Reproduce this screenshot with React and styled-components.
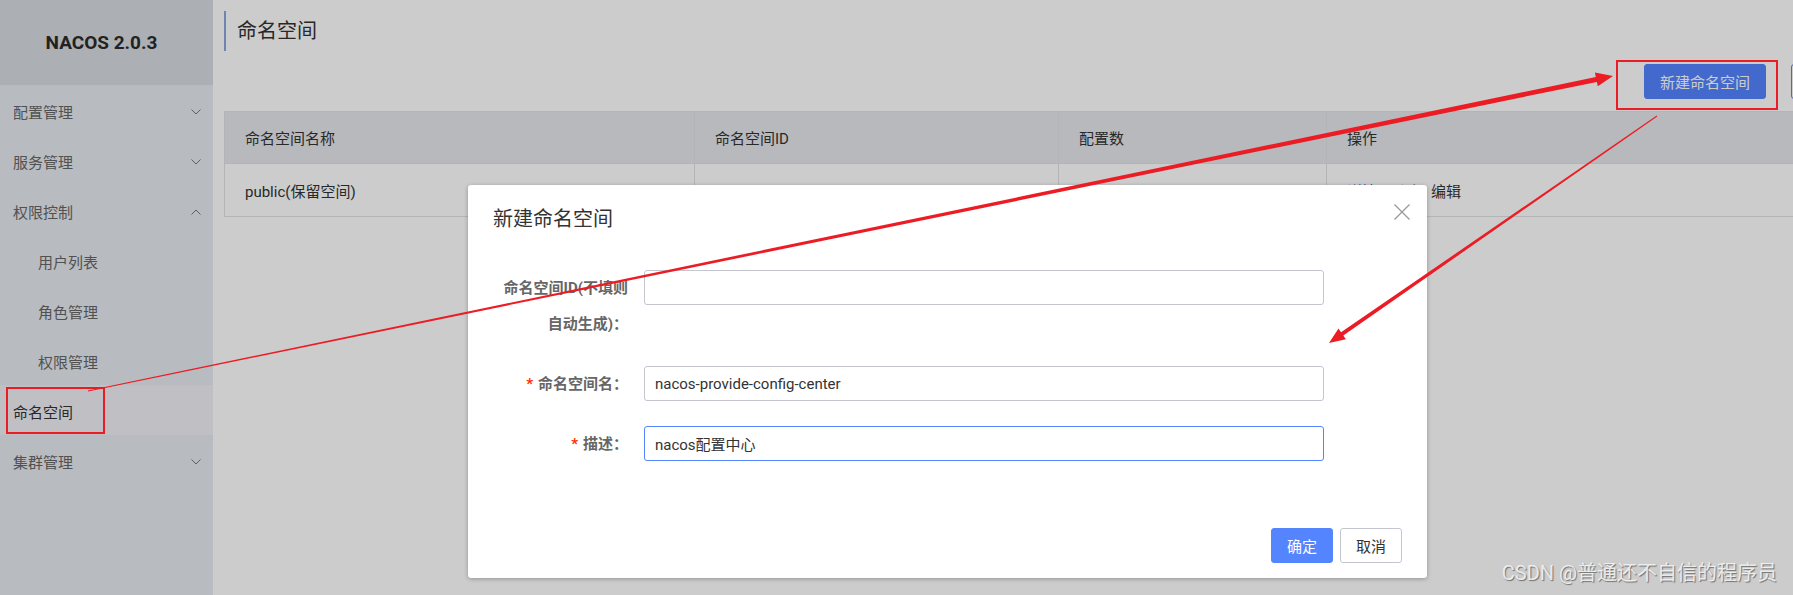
import React from 'react'
import styled, { createGlobalStyle } from 'styled-components'

const GlobalStyle = createGlobalStyle`
  html, body {
    margin: 0;
    padding: 0;
  }
  body {
    width: 1793px;
    height: 595px;
    overflow: hidden;
    font-family: Roboto, "Noto Sans CJK SC", sans-serif;
    font-size: 15px;
    color: #333;
    background: #fff;
  }
  * {
    box-sizing: border-box;
  }
`

const Page = styled.div`
  position: relative;
  display: flex;
  width: 1793px;
  height: 595px;
  overflow: hidden;
`

const Sidebar = styled.aside`
  width: 213px;
  flex-shrink: 0;
  display: flex;
  flex-direction: column;
  background: #e7ebf0;
`

const Brand = styled.div`
  height: 85px;
  display: flex;
  align-items: center;
  justify-content: center;
  padding-right: 10px;
  background: #d8dce1;
  font-size: 19px;
  font-weight: 700;
  color: #2b2b2b;
`

const MenuItem = styled.div`
  height: 50px;
  display: flex;
  align-items: center;
  justify-content: space-between;
  padding: 3px 12px 0 ${p => (p.$sub ? 38 : 13)}px;
  background: ${p => (p.$active ? '#f0eff5' : 'transparent')};
  color: ${p => (p.$active ? '#333' : '#666')};
  font-size: 15px;
`

const Main = styled.main`
  flex: 1;
  min-width: 0;
  overflow: hidden;
  padding: 11px 0 0 11px;
  background: #fff;
`

const Content = styled.div`
  width: 1667px;
`

const PageTitle = styled.h1`
  margin: 0;
  height: 40px;
  padding-left: 11px;
  border-left: 2px solid #8aa7e0;
  font-size: 20px;
  font-weight: 400;
  line-height: 40px;
  color: #333;
`

const Toolbar = styled.div`
  display: flex;
  justify-content: flex-end;
  gap: 25px;
  margin-top: 13px;
  height: 35px;
`

const Button = styled.button`
  height: 35px;
  padding: 0 15px;
  min-width: ${p => p.$width || 0}px;
  display: inline-flex;
  align-items: center;
  justify-content: center;
  border-radius: 3px;
  border: 1px solid ${p => (p.$primary || p.$outline ? '#5584ff' : '#c4c6cf')};
  background: ${p => (p.$primary ? '#5584ff' : '#fff')};
  color: ${p => (p.$primary ? '#fff' : '#333')};
  font-family: inherit;
  font-size: 15px;
  white-space: nowrap;
`

const Table = styled.table`
  margin-top: 12px;
  width: 100%;
  border-collapse: collapse;
  table-layout: fixed;
  font-size: 15px;
`

const Th = styled.th`
  height: 52px;
  padding: 0 20px;
  background: #e7e8ed;
  border: 1px solid #e2e2e4;
  text-align: left;
  font-weight: 400;
  color: #333;
`

const Td = styled.td`
  height: 53px;
  padding: 0 20px;
  border: 1px solid #e2e2e4;
  color: #333;
`

const OpLink = styled.span`
  margin-right: 12px;
  color: ${p => (p.$link ? '#2a5ed8' : '#333')};
`

const Mask = styled.div`
  position: absolute;
  inset: 0;
  background: rgba(0, 0, 0, 0.2);
`

const Dialog = styled.div`
  position: absolute;
  left: 468px;
  top: 185px;
  width: 959px;
  height: 393px;
  display: flex;
  flex-direction: column;
  background: #fff;
  border-radius: 3px;
  box-shadow: 0 1px 4px rgba(0, 0, 0, 0.28);
`

const DialogHeader = styled.div`
  height: 64px;
  display: flex;
  align-items: center;
  justify-content: space-between;
  padding: 0 17px 0 25px;
`

const DialogTitle = styled.div`
  font-size: 20px;
  color: #333;
`

const Close = styled.svg`
  align-self: flex-start;
  margin-top: 19px;
`

const DialogBody = styled.div`
  padding: 21px 25px 0;
`

const FormRow = styled.div`
  display: flex;
  align-items: flex-start;
  margin-bottom: 24px;
`

const Label = styled.label`
  width: 151px;
  flex-shrink: 0;
  padding-right: 16px;
  text-align: right;
  line-height: 36px;
  font-size: 15px;
  font-weight: 700;
  color: #666;
`

const Required = styled.span`
  margin-right: 5px;
  color: #ff3000;
`

const Input = styled.input`
  width: 680px;
  height: 35px;
  padding: 0 10px;
  border: 1px solid ${p => (p.$focus ? '#5584ff' : '#c4c6cf')};
  border-radius: 3px;
  outline: none;
  font-family: inherit;
  font-size: 15px;
  color: #333;
`

const DialogFooter = styled.div`
  margin-top: auto;
  display: flex;
  justify-content: flex-end;
  gap: 7px;
  padding: 0 25px 15px;
`

const Watermark = styled.div`
  position: absolute;
  right: 16px;
  bottom: 8px;
  font-size: 20px;
  line-height: 28px;
  color: rgba(245, 245, 245, 0.9);
  text-shadow: 1px 1px 1px rgba(0, 0, 0, 0.45);
`

const Annotations = styled.svg`
  position: absolute;
  left: 0;
  top: 0;
  pointer-events: none;
`

const menu = [
  { label: '配置管理', chevron: 'down' },
  { label: '服务管理', chevron: 'down' },
  { label: '权限控制', chevron: 'up' },
  { label: '用户列表', sub: true },
  { label: '角色管理', sub: true },
  { label: '权限管理', sub: true },
  { label: '命名空间', active: true },
  { label: '集群管理', chevron: 'down' },
]

const Chevron = ({ dir }) => (
  <svg width="10" height="6" viewBox="0 0 10 6">
    <polyline
      points={dir === 'up' ? '0.5,5.5 5,1 9.5,5.5' : '0.5,0.5 5,5 9.5,0.5'}
      fill="none"
      stroke="#777"
      strokeWidth="1"
    />
  </svg>
)

const RefreshIcon = () => (
  <svg width="16" height="16" viewBox="0 0 16 16">
    <path d="M13 8a5 5 0 1 1-1.5-3.6M13 2v3h-3" fill="none" stroke="#5584ff" strokeWidth="1.3" />
  </svg>
)

// tapered arrow, thin at the start, thick near the head
function arrowPoints([sx, sy], [tx, ty], w0, w1, headLen, headHalf) {
  const L = Math.hypot(tx - sx, ty - sy)
  const ux = (tx - sx) / L
  const uy = (ty - sy) / L
  const nx = -uy
  const ny = ux
  const bx = tx - ux * headLen
  const by = ty - uy * headLen
  return [
    [sx + (nx * w0) / 2, sy + (ny * w0) / 2],
    [bx + (nx * w1) / 2, by + (ny * w1) / 2],
    [bx + nx * headHalf, by + ny * headHalf],
    [tx, ty],
    [bx - nx * headHalf, by - ny * headHalf],
    [bx - (nx * w1) / 2, by - (ny * w1) / 2],
    [sx - (nx * w0) / 2, sy - (ny * w0) / 2],
  ]
    .map(p => p.map(v => v.toFixed(1)).join(','))
    .join(' ')
}

const RED = '#ec1c24'

const App = () => {
  return (
    <Page>
      <GlobalStyle />
      <Sidebar>
        <Brand>NACOS 2.0.3</Brand>
        {menu.map(m => (
          <MenuItem key={m.label} $sub={m.sub} $active={m.active}>
            <span>{m.label}</span>
            {m.chevron && <Chevron dir={m.chevron} />}
          </MenuItem>
        ))}
      </Sidebar>

      <Main>
        <Content>
          <PageTitle>命名空间</PageTitle>
          <Toolbar>
            <Button $primary $width={122}>新建命名空间</Button>
            <Button $outline $width={100}><RefreshIcon /></Button>
          </Toolbar>
          <Table>
            <colgroup>
              <col style={{ width: 470 }} />
              <col style={{ width: 364 }} />
              <col style={{ width: 268 }} />
              <col />
            </colgroup>
            <thead>
              <tr>
                <Th>命名空间名称</Th>
                <Th>命名空间ID</Th>
                <Th>配置数</Th>
                <Th>操作</Th>
              </tr>
            </thead>
            <tbody>
              <tr>
                <Td>public(保留空间)</Td>
                <Td></Td>
                <Td>0</Td>
                <Td>
                  <OpLink $link>详情</OpLink>
                  <OpLink>删除</OpLink>
                  <OpLink>编辑</OpLink>
                </Td>
              </tr>
            </tbody>
          </Table>
        </Content>
      </Main>

      <Mask />

      <Dialog>
        <DialogHeader>
          <DialogTitle>新建命名空间</DialogTitle>
          <Close width="16" height="16" viewBox="0 0 16 16">
            <path d="M0.5 0.5 L15.5 15.5 M15.5 0.5 L0.5 15.5" stroke="#999" strokeWidth="1.3" />
          </Close>
        </DialogHeader>
        <DialogBody>
          <FormRow>
            <Label>命名空间ID(不填则自动生成)：</Label>
            <Input defaultValue="" />
          </FormRow>
          <FormRow>
            <Label><Required>*</Required>命名空间名：</Label>
            <Input defaultValue="nacos-provide-config-center" />
          </FormRow>
          <FormRow>
            <Label><Required>*</Required>描述：</Label>
            <Input $focus defaultValue="nacos配置中心" />
          </FormRow>
        </DialogBody>
        <DialogFooter>
          <Button $primary>确定</Button>
          <Button>取消</Button>
        </DialogFooter>
      </Dialog>

      <Watermark>CSDN @普通还不自信的程序员</Watermark>

      <Annotations width="1793" height="595" viewBox="0 0 1793 595">
        <rect x="1617" y="61" width="160" height="48" fill="none" stroke={RED} strokeWidth="2" />
        <rect x="7" y="388" width="97" height="45" fill="none" stroke={RED} strokeWidth="2" />
        <polygon points={arrowPoints([88, 391], [1613, 76], 1, 5, 17, 7)} fill={RED} />
        <polygon points={arrowPoints([1657, 116], [1329, 343], 1.2, 4, 16, 6.5)} fill={RED} />
      </Annotations>
    </Page>
  )
}

export default App
